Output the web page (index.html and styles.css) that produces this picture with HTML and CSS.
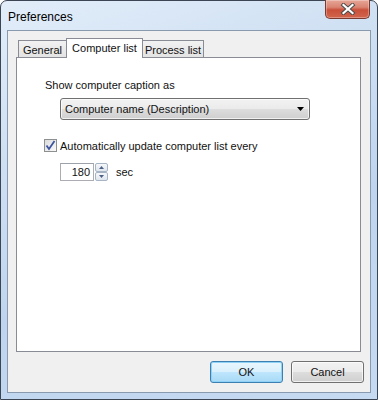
FILE: index.html
```html
<!DOCTYPE html>
<html>
<head>
<meta charset="utf-8">
<link rel="stylesheet" href="styles.css">
</head>
<body>
<div class="window">
  <div class="titlebar">
    <span class="title">Preferences</span>
    <div class="close">
      <svg width="16" height="12" viewBox="0 0 16 12">
        <path d="M3.5 2 L12.5 10 M12.5 2 L3.5 10" stroke="#4a4a4a" stroke-width="4" stroke-linecap="square" fill="none"/>
        <path d="M3.5 2 L12.5 10 M12.5 2 L3.5 10" stroke="#ffffff" stroke-width="2.2" stroke-linecap="square" fill="none"/>
      </svg>
    </div>
  </div>
  <div class="client">
    <div class="tabs">
      <div class="tab t-general">General</div>
      <div class="tab selected t-comp">Computer list</div>
      <div class="tab t-proc">Process list</div>
    </div>
    <div class="panel">
      <div class="label">Show computer caption as</div>
      <div class="combo">
        <span>Computer name (Description)</span>
        <svg class="arrow" width="7" height="4" viewBox="0 0 7 4"><path d="M0 0 H7 L3.5 4 Z" fill="#000"/></svg>
      </div>
      <div class="checkrow">
        <div class="checkbox">
          <svg width="11" height="11" viewBox="0 0 11 11"><path d="M1.5 5.5 L4 9 L9.5 1" stroke="#3d55a0" stroke-width="1.8" fill="none"/></svg>
        </div>
        <span>Automatically update computer list every</span>
      </div>
      <div class="spinrow">
        <div class="edit">180</div>
        <div class="spin">
          <div class="sbtn"><svg width="5" height="3" viewBox="0 0 5 3"><path d="M0 3 H5 L2.5 0 Z" fill="#4d6185"/></svg></div>
          <div class="sbtn"><svg width="5" height="3" viewBox="0 0 5 3"><path d="M0 0 H5 L2.5 3 Z" fill="#4d6185"/></svg></div>
        </div>
        <span class="sec">sec</span>
      </div>
    </div>
    <div class="buttons">
      <div class="btn default">OK</div>
      <div class="btn">Cancel</div>
    </div>
  </div>
</div>
</body>
</html>
```
FILE: styles.css
```css
html, body {
  margin: 0;
  padding: 0;
  background: #ffffff;
}
body {
  font-family: "Liberation Sans", Arial, sans-serif;
  font-size: 11px;
  color: #111;
}
.window {
  width: 378px;
  height: 400px;
  box-sizing: border-box;
  border: 1px solid #3c4554;
  border-radius: 7px 7px 0 0;
  background: linear-gradient(160deg, #e2edf9 0%, #cfe0f3 30%, #bfd5ef 60%, #c6daf1 100%);
  padding: 0 6px 6px 6px;
  display: flex;
  flex-direction: column;
}
.titlebar {
  height: 29px;
  display: flex;
  align-items: center;
  position: relative;
}
.title {
  font-size: 12px;
  margin-left: 1px;
  margin-top: 2px;
  color: #000;
}
.close {
  position: absolute;
  right: 1px;
  top: -1px;
  width: 43px;
  height: 18px;
  border: 1px solid #7a3a30;
  border-top: none;
  border-radius: 0 0 5px 5px;
  background: linear-gradient(#e6a696 0%, #d98472 40%, #c9503a 55%, #d2654c 100%);
  box-shadow: inset 0 0 0 1px rgba(255,255,255,0.3);
  display: flex;
  align-items: center;
  justify-content: center;
}
.client {
  flex: 1;
  border: 1px solid #8a9aae;
  background: #f0f0f0;
  padding: 7px 9px 9px 8px;
  display: flex;
  flex-direction: column;
}
.tabs {
  height: 19px;
  display: flex;
  align-items: flex-end;
  padding-left: 2px;
}
.tab {
  box-sizing: border-box;
  height: 17px;
  border: 1px solid #898c95;
  border-bottom: none;
  background: linear-gradient(#f2f2f2, #e3e3e3);
  display: flex;
  align-items: center;
  justify-content: center;
  padding-top: 2px;
  font-size: 11px;
}
.t-general { width: 48px; border-right: none; }
.t-comp { width: 77px; }
.t-proc { width: 61px; border-left: none; }
.tab.selected {
  height: 20px;
  background: #ffffff;
  margin-bottom: -1px;
  position: relative;
  z-index: 1;
  padding-top: 0;
  padding-bottom: 2px;
}
.panel {
  flex: 1;
  background: #ffffff;
  border: 1px solid #898c95;
  padding: 21px 0 0 28px;
}
.label {
  height: 13px;
  line-height: 13px;
}
.combo {
  box-sizing: border-box;
  width: 250px;
  height: 22px;
  margin: 6px 0 0 15px;
  border: 1px solid #707070;
  border-radius: 3px;
  background: linear-gradient(#f2f2f2 0%, #ebebeb 50%, #dddddd 51%, #cfcfcf 100%);
  box-shadow: inset 0 0 0 1px rgba(255,255,255,0.7);
  display: flex;
  align-items: center;
  padding: 0 5px 0 4px;
  justify-content: space-between;
}
.checkrow {
  display: flex;
  align-items: center;
  margin-top: 19px;
  height: 13px;
}
.checkbox {
  box-sizing: border-box;
  width: 13px;
  height: 13px;
  border: 1px solid #8e8f8f;
  background: linear-gradient(135deg, #dcdcdc, #fafafa);
  display: flex;
  align-items: center;
  justify-content: center;
  margin-right: 3px;
  margin-left: -1px;
}
.spinrow {
  display: flex;
  align-items: center;
  margin-top: 11px;
  margin-left: 15px;
}
.edit {
  box-sizing: border-box;
  width: 34px;
  height: 18px;
  border: 1px solid #abadb3;
  border-top-color: #9da1aa;
  background: #fff;
  text-align: right;
  line-height: 16px;
  padding-right: 3px;
  font-size: 11px;
}
.spin {
  display: flex;
  flex-direction: column;
  margin-left: 1px;
}
.sbtn {
  box-sizing: border-box;
  width: 13px;
  height: 9px;
  border: 1px solid #a7b4c4;
  border-radius: 2px;
  background: linear-gradient(#f6f8fa, #dfe6ee);
  display: flex;
  align-items: center;
  justify-content: center;
}
.sec {
  margin-left: 8px;
}
.buttons {
  display: flex;
  justify-content: flex-end;
  gap: 8px;
  margin-top: 9px;
  margin-right: -3px;
}
.btn {
  box-sizing: border-box;
  width: 73px;
  height: 22px;
  border: 1px solid #707070;
  border-radius: 3px;
  background: linear-gradient(#f2f2f2 0%, #ebebeb 50%, #dddddd 51%, #cfcfcf 100%);
  box-shadow: inset 0 0 0 1px rgba(255,255,255,0.7);
  display: flex;
  align-items: center;
  justify-content: center;
}
.btn.default {
  border-color: #3c7fb1;
  background: linear-gradient(#eaf6fd 0%, #d9f0fc 50%, #bee6fd 51%, #a7d9f5 100%);
  box-shadow: inset 0 0 0 1px #8fd2f7;
}
```
